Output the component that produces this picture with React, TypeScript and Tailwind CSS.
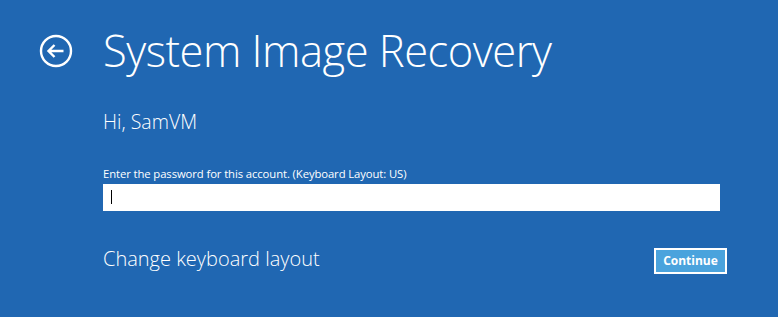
import React from "react";

export default function App() {
  return (
    <div
      className="w-[778px] h-[317px] bg-[#2067b2] text-white overflow-hidden"
      style={{ fontFamily: '"Open Sans", "Noto Sans", sans-serif' }}
    >
      {/* HEADER */}
      <div className="flex items-center pt-[22px] h-[58px] box-content">
        <div className="w-[103px] flex">
          <svg width="34" height="34" viewBox="0 0 34 34" className="ml-[39px]">
            <circle cx="17" cy="17" r="15" fill="none" stroke="white" strokeWidth="2.4" />
            <path d="M9.5 17h15M15.5 11l-6 6 6 6" fill="none" stroke="white" strokeWidth="2.4" />
          </svg>
        </div>
        <h1 className="text-[43.5px] font-light tracking-[-0.5px] leading-none">System Image Recovery</h1>
      </div>

      {/* BODY */}
      <div className="pl-[103px] pr-[58px]">
        <p className="mt-[32px] text-[19.5px] font-light leading-none">Hi, SamVM</p>
        <p className="mt-[36px] text-[11.3px] tracking-[-0.1px] leading-none">
          Enter the password for this account. (Keyboard Layout: US)
        </p>
        <div className="mt-[5px] h-[27px] bg-white flex items-center pl-[8px]">
          <div className="w-[1px] h-[14px] bg-black" />
        </div>
        <div className="mt-[35px] flex items-center justify-between">
          <span className="text-[20px] font-light leading-none -mt-[2px]">Change keyboard layout</span>
          <button className="w-[73px] h-[26px] border-2 border-white bg-[#4aa3dd] text-[12px] font-bold text-white flex items-center justify-center mr-[-7px] mt-[2px]">
            Continue
          </button>
        </div>
      </div>
    </div>
  );
}
